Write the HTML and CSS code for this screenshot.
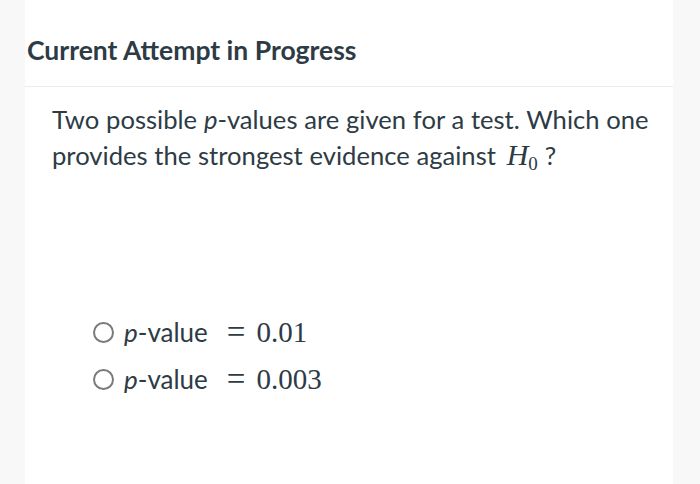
FILE: index.html
```html
<!DOCTYPE html>
<html>
<head>
<meta charset="utf-8">
<link rel="stylesheet" href="styles.css">
</head>
<body>
<div class="card">
  <div class="header"><h1 class="title">Current Attempt in Progress</h1></div>
  <div class="question">
    <p class="prompt">Two possible <i>p</i>-values are given for a test. Which one provides the strongest evidence against <span class="math"><i>H</i><sub>0</sub></span>?</p>
    <div class="options">
      <label class="option"><span class="radio"></span><span class="label"><i>p</i>-value</span><span class="math eq">=</span><span class="math num">0.01</span></label>
      <label class="option"><span class="radio"></span><span class="label"><i>p</i>-value</span><span class="math eq">=</span><span class="math num">0.003</span></label>
    </div>
  </div>
</div>
</body>
</html>
```
FILE: styles.css
```css
html, body {
  margin: 0;
  padding: 0;
  height: 100%;
}
body {
  background: #f8f8f8;
  font-family: Lato, "Liberation Sans", sans-serif;
  color: #2d3b45;
}
.card {
  margin: 0 27px 0 25px;
  height: 484px;
  background: #fff;
}
.header {
  padding: 34px 0 0 2px;
  height: 52px;
  border-bottom: 1px solid #ececec;
}
.title {
  margin: 0;
  font-size: 26.5px;
  font-weight: 700;
  line-height: 32px;
}
.question {
  padding: 14px 18px 0 27px;
}
.prompt {
  margin: 0;
  font-size: 25.6px;
  line-height: 36px;
  word-spacing: 0.2px;
}
.math {
  font-family: "Liberation Serif", "DejaVu Serif", serif;
}
.math i {
  font-size: 30px;
  margin-left: 4px;
}
.math sub {
  font-size: 19px;
  vertical-align: -5px;
  line-height: 0;
  margin-right: 7px;
}
.options {
  margin-top: 140px;
  padding-left: 41px;
  display: flex;
  flex-direction: column;
  gap: 13px;
}
.option {
  display: flex;
  align-items: center;
  font-size: 26px;
  line-height: 34px;
}
.radio {
  width: 17px;
  height: 17px;
  border: 2px solid #7a7a7a;
  border-radius: 50%;
  margin-right: 10px;
}
.eq {
  font-size: 33px;
  margin-left: 19px;
  margin-right: 11px;
}
.num {
  font-size: 29px;
}
```
